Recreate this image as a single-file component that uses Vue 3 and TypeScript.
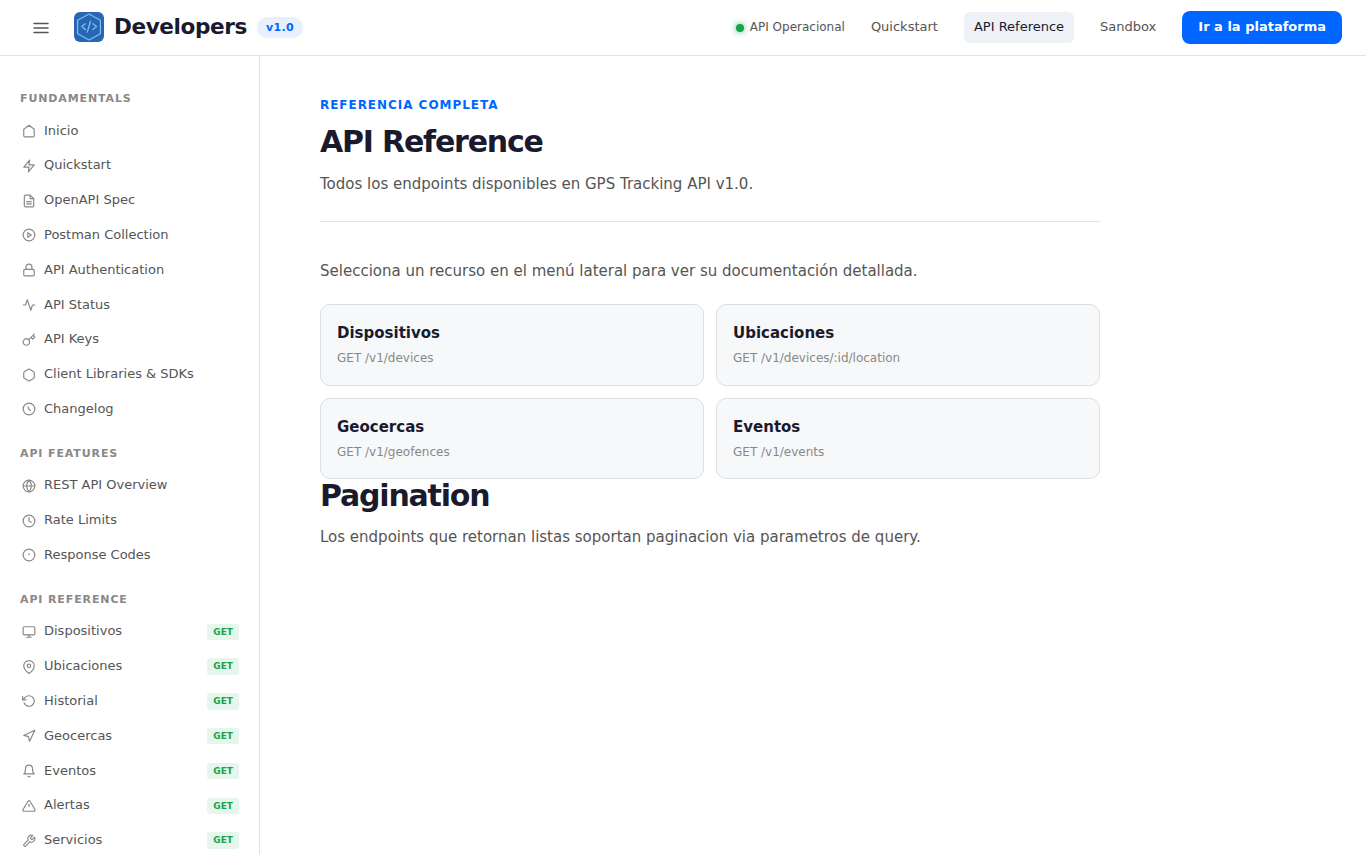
<script setup lang="ts">
interface NavItem {
  label: string
  icon: string
  method?: string
}
interface NavSection {
  title: string
  items: NavItem[]
}
interface Resource {
  name: string
  endpoint: string
}

const sections: NavSection[] = [
  {
    title: 'Fundamentals',
    items: [
      { label: 'Inicio', icon: '<path d="M3 9l9-7 9 7v11a2 2 0 0 1-2 2H5a2 2 0 0 1-2-2z"/>' },
      { label: 'Quickstart', icon: '<path d="M13 2L3 14h9l-1 8 10-12h-9l1-8z"/>' },
      { label: 'OpenAPI Spec', icon: '<path d="M14 2H6a2 2 0 0 0-2 2v16a2 2 0 0 0 2 2h12a2 2 0 0 0 2-2V8z"/><path d="M14 2v6h6M16 13H8M16 17H8"/>' },
      { label: 'Postman Collection', icon: '<circle cx="12" cy="12" r="10"/><path d="M10 8l6 4-6 4V8z"/>' },
      { label: 'API Authentication', icon: '<rect x="3" y="11" width="18" height="11" rx="2"/><path d="M7 11V7a5 5 0 0 1 10 0v4"/>' },
      { label: 'API Status', icon: '<path d="M22 12h-4l-3 9L9 3l-3 9H2"/>' },
      { label: 'API Keys', icon: '<path d="M21 2l-2 2m-7.61 7.61a5.5 5.5 0 1 1-7.778 7.778 5.5 5.5 0 0 1 7.777-7.777zm0 0L15.5 7.5m0 0l3 3L22 7l-3-3m-3.5 3.5L19 4"/>' },
      { label: 'Client Libraries & SDKs', icon: '<path d="M21 16V8a2 2 0 0 0-1-1.73l-7-4a2 2 0 0 0-2 0l-7 4A2 2 0 0 0 3 8v8a2 2 0 0 0 1 1.73l7 4a2 2 0 0 0 2 0l7-4A2 2 0 0 0 21 16z"/>' },
      { label: 'Changelog', icon: '<circle cx="12" cy="12" r="10"/><path d="M10.500 8.500l1.200 4 2.500 2"/>' },
    ],
  },
  {
    title: 'API Features',
    items: [
      { label: 'REST API Overview', icon: '<circle cx="12" cy="12" r="10"/><path d="M2 12h20M12 2a15.3 15.3 0 0 1 4 10 15.3 15.3 0 0 1-4 10 15.3 15.3 0 0 1-4-10 15.3 15.3 0 0 1 4-10z"/>' },
      { label: 'Rate Limits', icon: '<circle cx="12" cy="12" r="10"/><path d="M12 6v6l4 2"/>' },
      { label: 'Response Codes', icon: '<circle cx="12" cy="12" r="10"/><path d="M12 10v1.500"/>' },
    ],
  },
  {
    title: 'API Reference',
    items: [
      { label: 'Dispositivos', method: 'GET', icon: '<rect x="2" y="3" width="20" height="14" rx="2"/><path d="M8 21h8M12 17v4"/>' },
      { label: 'Ubicaciones', method: 'GET', icon: '<path d="M21 10c0 7-9 13-9 13s-9-6-9-13a9 9 0 0 1 18 0z"/><circle cx="12" cy="10" r="3"/>' },
      { label: 'Historial', method: 'GET', icon: '<path d="M1 4v6h6"/><path d="M3.51 15a9 9 0 1 0 2.13-9.36L1 10"/>' },
      { label: 'Geocercas', method: 'GET', icon: '<path d="M3 11l19-9-9 19-2-8-8-2z"/>' },
      { label: 'Eventos', method: 'GET', icon: '<path d="M18 8A6 6 0 0 0 6 8c0 7-3 9-3 9h18s-3-2-3-9"/><path d="M13.73 21a2 2 0 0 1-3.46 0"/>' },
      { label: 'Alertas', method: 'GET', icon: '<path d="M10.29 3.86L1.82 18a2 2 0 0 0 1.71 3h16.94a2 2 0 0 0 1.71-3L13.71 3.86a2 2 0 0 0-3.42 0z"/><path d="M12 9v4"/>' },
      { label: 'Servicios', method: 'GET', icon: '<path d="M14.7 6.3a1 1 0 0 0 0 1.4l1.6 1.6a1 1 0 0 0 1.4 0l3.77-3.77a6 6 0 0 1-7.94 7.94l-6.91 6.91a2.12 2.12 0 0 1-3-3l6.91-6.91a6 6 0 0 1 7.94-7.94l-3.76 3.76z"/>' },
    ],
  },
]

const resources: Resource[] = [
  { name: 'Dispositivos', endpoint: 'GET /v1/devices' },
  { name: 'Ubicaciones', endpoint: 'GET /v1/devices/:id/location' },
  { name: 'Geocercas', endpoint: 'GET /v1/geofences' },
  { name: 'Eventos', endpoint: 'GET /v1/events' },
]
</script>

<template>
  <div class="page">
    <header class="topbar">
      <button class="menu" aria-label="Menu">
        <svg width="18" height="18" viewBox="0 0 18 18" fill="none" stroke="currentColor" stroke-width="1.5" stroke-linecap="round">
          <path d="M2 4.5h14M2 9h14M2 13.5h14" />
        </svg>
      </button>
      <a class="brand">
        <svg class="logo" width="30" height="30" viewBox="0 0 30 30" fill="none">
          <rect width="30" height="30" rx="6" fill="#2866b4" />
          <g stroke="#74c3ee" stroke-linejoin="round" stroke-linecap="round">
            <path d="M15 2l11.400 6.300v13.400L15 28 3.600 21.700V8.300z" stroke-width="1.200" />
            <path d="M11.300 11.800L7.800 14.600l3.500 3M19 11.800l3.500 2.800-3.500 3M16.500 9.300l-3.200 10.800" stroke-width="1.300" />
          </g>
        </svg>
        <span class="wordmark">Developers</span>
        <span class="version">v1.0</span>
      </a>
      <nav class="topnav">
        <span class="status"><i class="dot"></i>API Operacional</span>
        <a class="toplink">Quickstart</a>
        <a class="toplink active">API Reference</a>
        <a class="toplink">Sandbox</a>
        <a class="cta">Ir a la plataforma</a>
      </nav>
    </header>

    <div class="body">
      <aside class="sidebar">
        <section v-for="section in sections" :key="section.title" class="group">
          <h2 class="group-title">{{ section.title }}</h2>
          <a v-for="item in section.items" :key="item.label" class="item">
            <svg class="icon" viewBox="0 0 24 24" v-html="item.icon"></svg>
            <span class="label">{{ item.label }}</span>
            <span v-if="item.method" class="method">{{ item.method }}</span>
          </a>
        </section>
      </aside>

      <main class="content">
        <header class="intro">
          <div class="eyebrow">Referencia completa</div>
          <h1>API Reference</h1>
          <p class="lead">Todos los endpoints disponibles en GPS Tracking API v1.0.</p>
        </header>
        <p class="hint">Selecciona un recurso en el menú lateral para ver su documentación detallada.</p>
        <div class="cards">
          <a v-for="r in resources" :key="r.name" class="card">
            <div class="card-name">{{ r.name }}</div>
            <div class="card-path">{{ r.endpoint }}</div>
          </a>
        </div>
        <h1>Pagination</h1>
        <p class="lead">Los endpoints que retornan listas soportan paginacion via parametros de query.</p>
      </main>
    </div>
  </div>
</template>

<style>
body {
  margin: 0;
  overflow: hidden;
}
</style>

<style scoped>
.page {
  height: 100vh;
  overflow: hidden;
  display: flex;
  flex-direction: column;
  background: #fff;
  color: #555;
  font-family: "DejaVu Sans", sans-serif;
  font-size: 15px;
  line-height: 1.6;
}
.page * {
  box-sizing: border-box;
}
.topbar {
  flex: none;
  display: flex;
  align-items: center;
  height: 56px;
  padding: 0 24px;
  border-bottom: 1px solid #e2e2e4;
}
.menu {
  display: flex;
  align-items: center;
  justify-content: center;
  width: 34px;
  height: 34px;
  margin-right: 16px;
  padding: 0;
  border: 0;
  background: none;
  color: #555;
}
.brand {
  display: flex;
  align-items: center;
  gap: 10px;
}
.logo {
  margin-bottom: 1px;
}
.wordmark {
  width: 133px;
  color: #1a1a2e;
  font-size: 21.6px;
  font-weight: 700;
  letter-spacing: -0.02em;
  line-height: 34px;
  margin-bottom: 2px;
  white-space: nowrap;
}
.version {
  padding: 2px 9px;
  border-radius: 11px;
  background: #e6f0ff;
  color: #0066ff;
  font-size: 11px;
  font-weight: 700;
  line-height: 17px;
  letter-spacing: 0.03em;
}
.topnav {
  display: flex;
  align-items: center;
  gap: 16px;
  margin-left: auto;
  font-size: 13px;
}
.status {
  display: flex;
  align-items: center;
  gap: 6px;
  font-size: 12px;
}
.dot {
  width: 8px;
  height: 8px;
  margin-top: 2px;
  border-radius: 50%;
  background: #16a34a;
  box-shadow: 0 0 6px rgba(22, 163, 74, 0.8);
}
.toplink {
  padding: 5px 10px;
  border-radius: 6px;
}
.toplink.active {
  background: #eef1f6;
  color: #1a1a2e;
}
.cta {
  padding: 6px 16px;
  border-radius: 8px;
  background: #0066ff;
  color: #fff;
  font-weight: 700;
}
.body {
  flex: 1;
  min-height: 0;
  display: flex;
}
.sidebar {
  flex: none;
  width: 260px;
  padding: 34px 20px 0;
  border-right: 1px solid #e2e2e4;
  overflow: hidden;
}
.group {
  margin-bottom: 18px;
}
.group-title {
  margin: 0 0 6px;
  color: #888;
  font-size: 11px;
  font-weight: 700;
  line-height: 17.6px;
  letter-spacing: 0.08em;
  text-transform: uppercase;
}
.item {
  display: flex;
  align-items: center;
  padding: 7px 0 7px 2px;
  font-size: 13px;
  line-height: 20.8px;
}
.icon {
  flex: none;
  width: 14px;
  height: 14px;
  margin: 0 8px 0 0;
  fill: none;
  stroke: #888;
  stroke-width: 2;
  stroke-linecap: round;
  stroke-linejoin: round;
}
.method {
  margin-left: auto;
  padding: 1px 6px;
  border-radius: 3px;
  background: #e6f6ec;
  color: #16a34a;
  font-size: 9px;
  font-weight: 700;
  line-height: 14.4px;
}
.content {
  width: 780px;
  margin-left: 60px;
  padding-top: 40px;
}
.eyebrow {
  margin-bottom: 10px;
  color: #0066ff;
  font-size: 12px;
  font-weight: 700;
  line-height: 19.2px;
  letter-spacing: 0.08em;
  text-transform: uppercase;
}
h1 {
  margin: 0 0 12.4px;
  color: #1a1a2e;
  font-size: 30px;
  font-weight: 700;
  line-height: 1.1;
  letter-spacing: -0.04em;
}
.lead {
  margin: 0;
  line-height: 27px;
}
.intro {
  padding-bottom: 23.6px;
  margin-bottom: 36px;
  border-bottom: 1px solid #e2e2e4;
}
.hint {
  margin: 0 0 20.2px;
  line-height: 26px;
}
.cards {
  display: grid;
  grid-template-columns: 1fr 1fr;
  gap: 12px;
}
.card {
  padding: 16px;
  border: 1px solid #dcdee2;
  border-radius: 10px;
  background: #f7f8fa;
}
.card-name {
  margin-bottom: 4px;
  color: #1a1a2e;
  font-weight: 700;
}
.card-path {
  color: #888;
  font-size: 12px;
}
</style>
